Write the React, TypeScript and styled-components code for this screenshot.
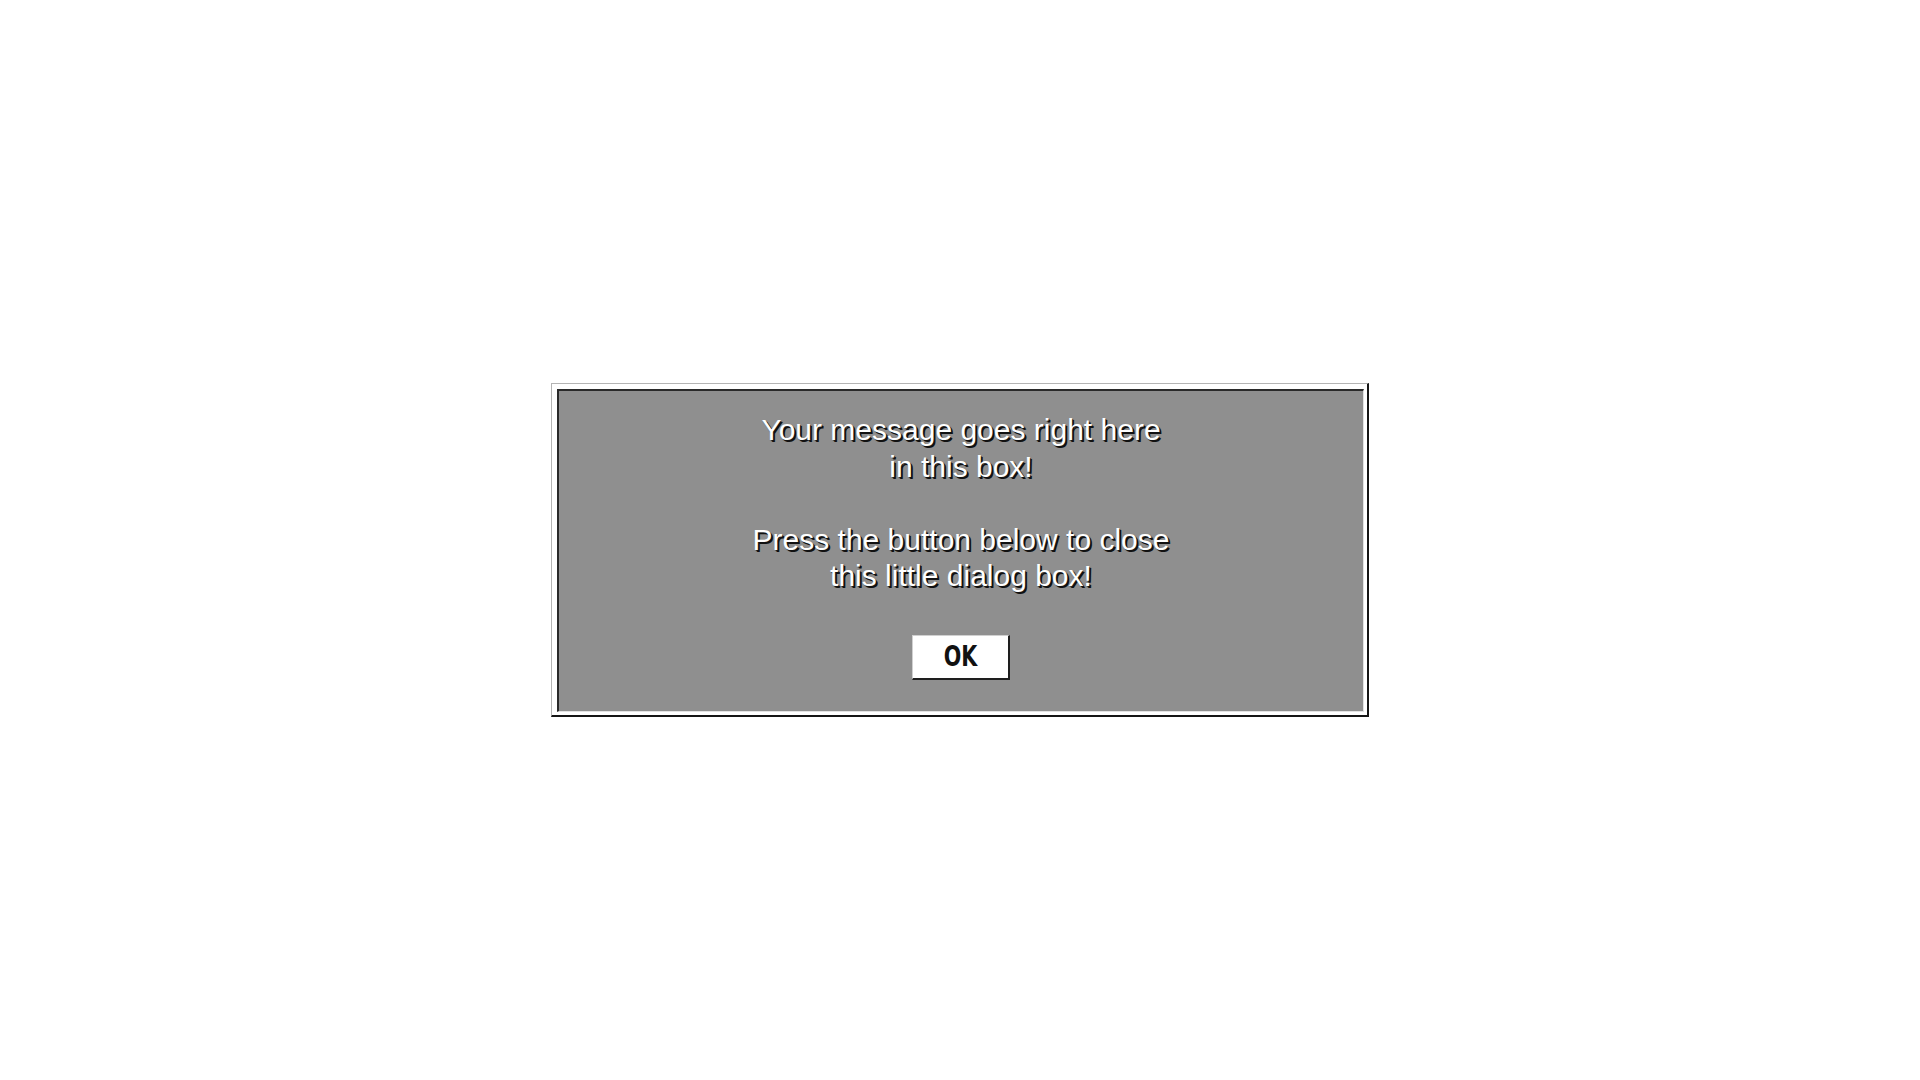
import React from "react";
import styled, { createGlobalStyle } from "styled-components";

const GlobalStyle = createGlobalStyle`
  html, body {
    margin: 0;
    padding: 0;
    background: #ffffff;
  }
  body {
    font-family: "Liberation Sans", Arial, sans-serif;
  }
`;

const Page = styled.div`
  width: 1920px;
  height: 1080px;
  display: flex;
  flex-direction: column;
  align-items: center;
  padding-top: 383px;
  box-sizing: border-box;
  background: #ffffff;
`;

// outer bevelled frame
const Frame = styled.div`
  width: 818px;
  box-sizing: border-box;
  background: #ffffff;
  border-top: 1px solid #b4b4b4;
  border-left: 1px solid #b4b4b4;
  border-right: 2px solid #151515;
  border-bottom: 2px solid #151515;
  padding: 5px 3px 3px 5px;
`;

// grey inset panel
const Panel = styled.div`
  background: #8f8f8f;
  border-top: 2px solid #2a2a2a;
  border-left: 2px solid #2a2a2a;
  border-right: 1px solid #e2e2e2;
  border-bottom: 1px solid #e2e2e2;
  padding: 21px 20px 31px;
  display: flex;
  flex-direction: column;
  align-items: center;
`;

const Message = styled.div`
  color: #ffffff;
  font-family: "Liberation Sans", Arial, sans-serif;
  font-size: 30px;
  line-height: 36.5px;
  text-align: center;
  text-shadow: 2px 2px 0 #111111, 1px 1px 1px #222;
`;

const Line = styled.div`
  min-height: 36.5px;
  white-space: nowrap;
`;

const OkButton = styled.button`
  margin-top: 40px;
  width: 98px;
  height: 45px;
  box-sizing: border-box;
  background: #ffffff;
  border: none;
  border-top: 1px solid #d0d0d0;
  border-left: 1px solid #d0d0d0;
  border-right: 2px solid #1e1e1e;
  border-bottom: 2px solid #1e1e1e;
  color: #111111;
  cursor: pointer;
  padding: 0;
  display: flex;
  align-items: center;
  justify-content: center;
`;

// tall condensed label
const OkLabel = styled.span`
  display: inline-block;
  font-family: "DejaVu Sans Condensed", "DejaVu Sans", sans-serif;
  font-stretch: condensed;
  font-weight: bold;
  font-size: 28px;
  line-height: 1;
  transform: scaleX(0.82);
`;

const lines = [
  "Your message goes right here",
  "in this box!",
  "",
  "Press the button below to close",
  "this little dialog box!",
];

export default function App() {
  return (
    <>
      <GlobalStyle />
      <Page>
        <Frame>
          <Panel>
            <Message>
              {lines.map((l, i) => (
                <Line key={i}>{l}</Line>
              ))}
            </Message>
            <OkButton>
              <OkLabel>OK</OkLabel>
            </OkButton>
          </Panel>
        </Frame>
      </Page>
    </>
  );
}
